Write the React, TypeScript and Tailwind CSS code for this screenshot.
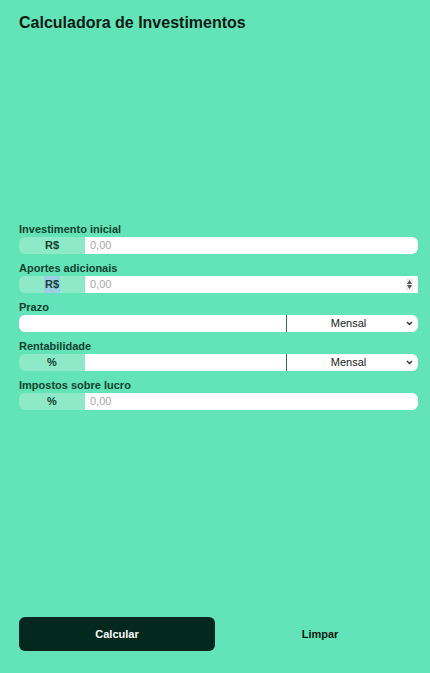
import React from "react";

const font = { fontFamily: '"Liberation Sans", Arial, sans-serif' };

function Label({ children }: { children: React.ReactNode }) {
  return (
    <div className="h-[16px] leading-[16px] text-[11px] font-bold text-[#12412f]">{children}</div>
  );
}

function Addon({ children, highlight }: { children: React.ReactNode; highlight?: boolean }) {
  return (
    <div className="w-[66px] shrink-0 h-full flex items-center justify-center rounded-l-[6px] bg-[#8ee9c9] text-[11px] font-bold text-[#12412f]">
      <span className={highlight ? "bg-[#9ccfe4] px-[1px]" : ""}>{children}</span>
    </div>
  );
}

function Select() {
  return (
    <div className="relative w-[132px] shrink-0 h-full bg-white border-l border-[#2f6b55] rounded-r-[6px] flex items-center justify-center text-[11px] text-[#222]">
      <span className="ml-[-8px]">Mensal</span>
      <svg className="absolute right-[5px] top-[6px]" width="7" height="5" viewBox="0 0 7 5">
        <path d="M1 1l2.5 2.5L6 1" stroke="#333" strokeWidth="1.4" fill="none" />
      </svg>
    </div>
  );
}

export default function App() {
  return (
    <div className="w-[430px] h-[673px] bg-[#62e4b8] flex flex-col pl-[19px] pr-[12px]" style={font}>
      <h1 className="mt-[11px] h-[24px] leading-[24px] text-[16px] font-bold text-[#0b1a14]">
        Calculadora de Investimentos
      </h1>
      <div className="mt-[186px] flex flex-col gap-[6px]">
        <div>
          <Label>Investimento inicial</Label>
          <div className="flex h-[17px]">
            <Addon>R$</Addon>
            <div className="flex-1 bg-white rounded-r-[6px] flex items-center pl-[5px] text-[11px] text-[#a8a8a8]">0,00</div>
          </div>
        </div>
        <div>
          <Label>Aportes adicionais</Label>
          <div className="flex h-[17px]">
            <Addon highlight>R$</Addon>
            <div className="flex-1 bg-white flex items-center pl-[5px] text-[11px] text-[#a8a8a8] relative">
              0,00
              <div className="absolute right-[5px] top-[2px] w-[7px] h-[13px] bg-[#f0f0f0] flex flex-col items-center justify-center gap-[1px]">
                <svg width="5" height="4" viewBox="0 0 5 4"><path d="M0 4L2.5 0L5 4z" fill="#555" /></svg>
                <svg width="5" height="4" viewBox="0 0 5 4"><path d="M0 0L2.5 4L5 0z" fill="#555" /></svg>
              </div>
            </div>
          </div>
        </div>
        <div>
          <Label>Prazo</Label>
          <div className="flex h-[17px]">
            <div className="flex-1 bg-white rounded-l-[6px]" />
            <Select />
          </div>
        </div>
        <div>
          <Label>Rentabilidade</Label>
          <div className="flex h-[17px]">
            <Addon>%</Addon>
            <div className="flex-1 bg-white" />
            <Select />
          </div>
        </div>
        <div>
          <Label>Impostos sobre lucro</Label>
          <div className="flex h-[17px]">
            <Addon>%</Addon>
            <div className="flex-1 bg-white rounded-r-[6px] flex items-center pl-[5px] text-[11px] text-[#a8a8a8]">0,00</div>
          </div>
        </div>
      </div>
      <div className="mt-auto mb-[22px] flex gap-[7px]">
        <button className="flex-1 h-[34px] rounded-[6px] bg-[#03291e] text-white text-[11px] font-bold">Calcular</button>
        <button className="flex-1 h-[34px] text-[#0b1a14] text-[11px] font-bold">Limpar</button>
      </div>
    </div>
  );
}
